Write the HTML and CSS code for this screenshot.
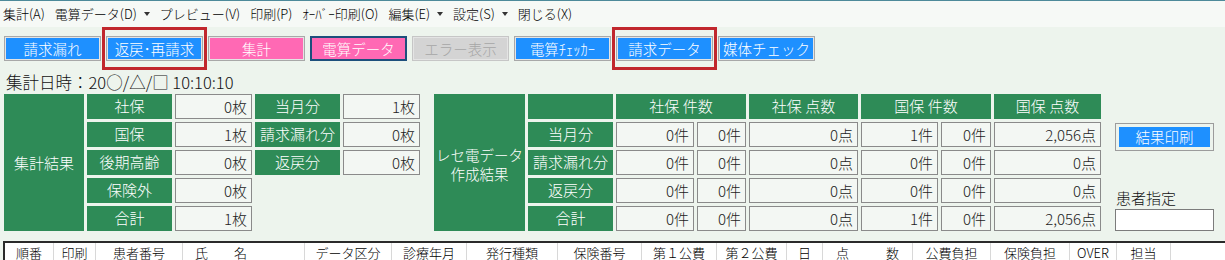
FILE: index.html
```html
<!DOCTYPE html>
<html>

<head>
	<meta charset="utf-8">
	<link rel="stylesheet" href="styles.css">
</head>

<body>
	<div class="menubar">
		<span class="menu">集計(A)</span>
		<span class="menu">電算データ(D)<i class="caret"></i></span>
		<span class="menu">プレビュー(V)</span>
		<span class="menu">印刷(P)</span>
		<span class="menu">ｵｰﾊﾞｰ印刷(O)</span>
		<span class="menu">編集(E)<i class="caret"></i></span>
		<span class="menu">設定(S)<i class="caret"></i></span>
		<span class="menu">閉じる(X)</span>
	</div>

	<div class="toolbar">
		<div class="btn blue">請求漏れ</div>
		<div class="btn blue marked">返戻･再請求</div>
		<div class="btn pink">集計</div>
		<div class="btn pink focused">電算データ</div>
		<div class="btn off">エラー表示</div>
		<div class="btn blue">電算ﾁｪｯｶｰ</div>
		<div class="btn blue marked">請求データ</div>
		<div class="btn blue">媒体チェック</div>
	</div>

	<div class="stamp">集計日時：20○/△/□ 10:10:10</div>

	<div class="results">
		<div class="tally">
			<div class="cell head big">集計結果</div>
			<div class="cell head">社保</div>
			<div class="cell val">0枚</div>
			<div class="cell head">当月分</div>
			<div class="cell val">1枚</div>
			<div class="cell head">国保</div>
			<div class="cell val">1枚</div>
			<div class="cell head">請求漏れ分</div>
			<div class="cell val">0枚</div>
			<div class="cell head">後期高齢</div>
			<div class="cell val">0枚</div>
			<div class="cell head">返戻分</div>
			<div class="cell val">0枚</div>
			<div class="cell head">保険外</div>
			<div class="cell val">0枚</div>
			<div class="cell head new-row">合計</div>
			<div class="cell val">1枚</div>
		</div>

		<div class="rece">
			<div class="cell head big"><span class="two-line">レセ電データ<br>作成結果</span></div>
			<div class="cell head"></div>
			<div class="cell head wide">社保 件数</div>
			<div class="cell head">社保 点数</div>
			<div class="cell head wide">国保 件数</div>
			<div class="cell head">国保 点数</div>

			<div class="cell head">当月分</div>
			<div class="cell val">0件</div>
			<div class="cell val">0件</div>
			<div class="cell val">0点</div>
			<div class="cell val">1件</div>
			<div class="cell val">0件</div>
			<div class="cell val">2,056点</div>

			<div class="cell head">請求漏れ分</div>
			<div class="cell val">0件</div>
			<div class="cell val">0件</div>
			<div class="cell val">0点</div>
			<div class="cell val">0件</div>
			<div class="cell val">0件</div>
			<div class="cell val">0点</div>

			<div class="cell head">返戻分</div>
			<div class="cell val">0件</div>
			<div class="cell val">0件</div>
			<div class="cell val">0点</div>
			<div class="cell val">0件</div>
			<div class="cell val">0件</div>
			<div class="cell val">0点</div>

			<div class="cell head">合計</div>
			<div class="cell val">0件</div>
			<div class="cell val">0件</div>
			<div class="cell val">0点</div>
			<div class="cell val">1件</div>
			<div class="cell val">0件</div>
			<div class="cell val">2,056点</div>
		</div>

		<div class="side">
			<div class="btn print">結果印刷</div>
			<div class="side-label">患者指定</div>
			<div class="field"></div>
		</div>
	</div>

	<div class="listhead">
		<div class="col">順番</div>
		<div class="col">印刷</div>
		<div class="col">患者番号</div>
		<div class="col left">氏　　名</div>
		<div class="col">データ区分</div>
		<div class="col">診療年月</div>
		<div class="col">発行種類</div>
		<div class="col">保険番号</div>
		<div class="col">第１公費</div>
		<div class="col">第２公費</div>
		<div class="col">日</div>
		<div class="col spread"><span>点</span><span>数</span></div>
		<div class="col">公費負担</div>
		<div class="col">保険負担</div>
		<div class="col">OVER</div>
		<div class="col">担当</div>
		<div class="col last"></div>
	</div>
</body>

</html>
```

FILE: styles.css
```css
body {
	margin: 0;
	padding: 0;
	background: #edf4ed;
	font-family: "Noto Sans CJK JP", "Noto Sans", sans-serif;
	font-weight: 300;
	color: #111;
	overflow: hidden;
}

/* menu */

.menubar {
	height: 26px;
	border-top: 1px solid #4d8a9a;
	background: #f6f9f6;
	display: flex;
	align-items: center;
	gap: 10px;
	padding-left: 3px;
	font-size: 13px;
	line-height: 16px;
	color: #000;
}

.menu {
	display: flex;
	align-items: center;
	white-space: nowrap;
}

.caret {
	width: 0;
	height: 0;
	margin-left: 7px;
	border-left: 3px solid transparent;
	border-right: 3px solid transparent;
	border-top: 4px solid #333;
}

/* toolbar */

.toolbar {
	display: flex;
	gap: 5px;
	padding: 9px 0 9px 4px;
}

.btn {
	box-sizing: border-box;
	width: 97px;
	height: 25px;
	border: 1px solid #a8a8a8;
	box-shadow: inset 0 0 0 1px #e4e4e4;
	color: #fff;
	font-size: 14.5px;
	line-height: 23px;
	text-align: center;
	white-space: nowrap;
	overflow: hidden;
}

.blue {
	background: #1e90ff;
}

.pink {
	background: #ff69b4;
}

.focused {
	border: 2px solid #1d4f7c;
	box-shadow: none;
	line-height: 21px;
}

.off {
	background: #d4d4d4;
	border-color: #c6c6c6;
	color: #a6a6a6;
}

.marked {
	position: relative;
	overflow: visible;
}

.marked::after {
	content: "";
	position: absolute;
	top: -10px;
	bottom: -10px;
	left: -5px;
	right: -5px;
	border: 3px solid #c1272d;
}

.stamp {
	height: 24px;
	padding-left: 6px;
	font-size: 16.5px;
	line-height: 24px;
	color: #111;
}

/* result tables */

.results {
	display: flex;
	gap: 14px;
	padding-left: 4px;
}

.tally,
.rece {
	display: grid;
	grid-template-rows: repeat(5, 25px);
	gap: 3px;
}

.tally {
	grid-template-columns: 80px 85px 77px 85px 77px;
}

.rece {
	grid-template-columns: 91px 85px 78px 49px 109px 77px 50px 107px;
}

.cell {
	box-sizing: border-box;
	font-size: 15px;
	line-height: 23px;
	white-space: nowrap;
}

.head {
	background: #2e8b57;
	color: #fff;
	text-align: center;
}

.big {
	grid-row: 1 / 6;
	display: flex;
	align-items: center;
	justify-content: center;
}

.two-line {
	font-size: 14.5px;
	line-height: 19px;
	padding-top: 2px;
}

.wide {
	grid-column: span 2;
}

.new-row {
	grid-column-start: 2;
}

.val {
	background: #f3f7f3;
	border: 1px solid #8a8a8a;
	text-align: right;
	padding-right: 4px;
	color: #222;
}

.side {
	width: 99px;
	display: flex;
	flex-direction: column;
}

.print {
	width: 99px;
	height: 28px;
	margin-top: 29px;
	padding: 3px;
	border-color: #9c9c9c;
	box-shadow: none;
	background: #1e90ff;
	background-clip: content-box;
	line-height: 20px;
}

.side-label {
	margin-top: auto;
	font-size: 15px;
	line-height: 20px;
	padding-left: 1px;
}

.field {
	box-sizing: border-box;
	height: 22px;
	margin-top: 1px;
	background: #fff;
	border: 1px solid #7c7c7c;
}

/* list header */

.listhead {
	margin: 10px 0 0 3px;
	border-top: 2px solid #2a2a2a;
	border-left: 2px solid #2a2a2a;
	background: #fff;
	display: grid;
	grid-template-columns: 49px 42px 87px 122px 87px 75px 91px 84px 75px 70px 36px 90px 78px 79px 47px 54px 1fr;
	font-size: 13px;
	line-height: 20px;
	color: #000;
}

.col {
	box-sizing: border-box;
	border-right: 1px solid #d8d8d8;
	text-align: center;
	white-space: nowrap;
	height: 20px;
}

.col.left {
	text-align: left;
	padding-left: 12px;
}

.col.spread {
	display: flex;
	justify-content: space-between;
	padding: 0 13px;
}

.col.last {
	border-right: none;
}
```
